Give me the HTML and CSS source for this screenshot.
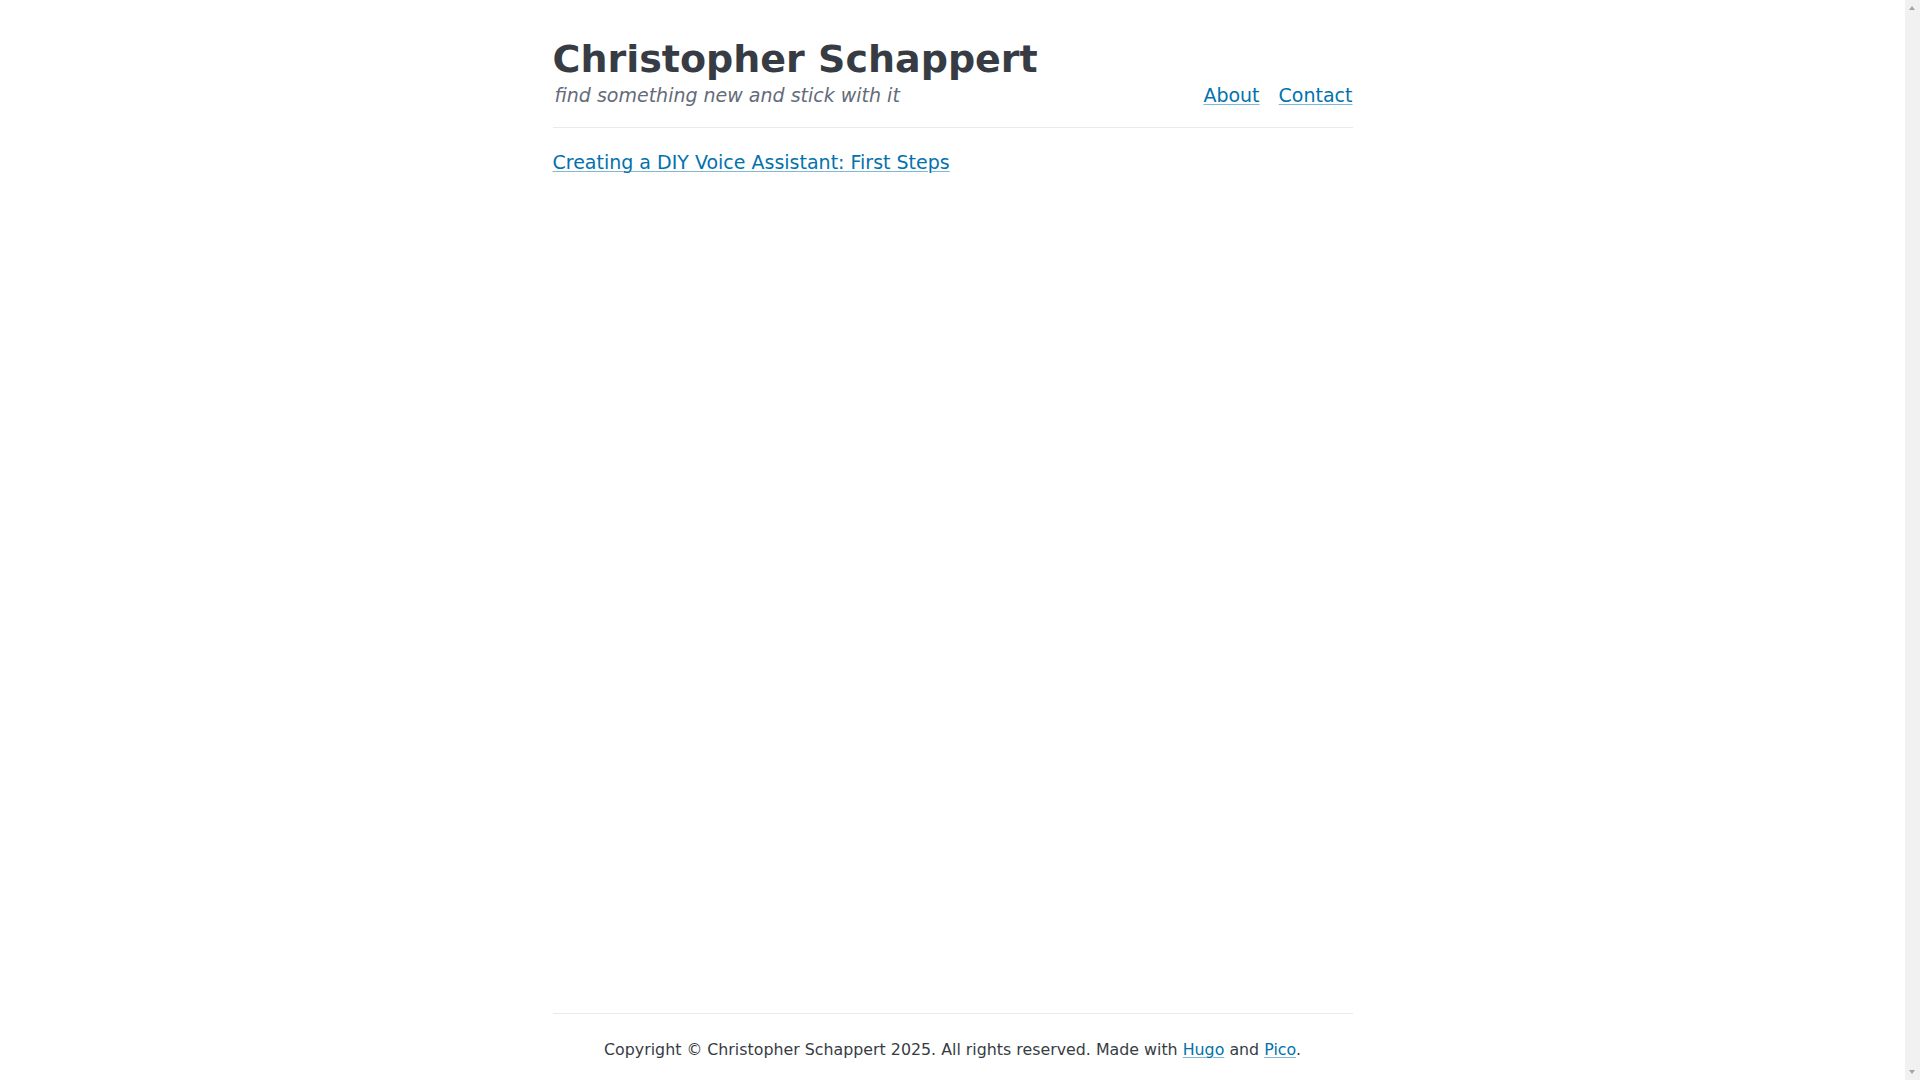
FILE: index.html
```html
<!DOCTYPE html>
<html lang="en">
<head>
<meta charset="utf-8">
<title>Christopher Schappert</title>
<link rel="stylesheet" href="styles.css">
</head>
<body>
<header class="container site-header">
  <nav class="nav">
    <div class="brand">
      <h1 class="title">Christopher Schappert</h1>
      <p class="tagline">find something new and stick with it</p>
    </div>
    <ul class="menu">
      <li><a href="#">About</a></li>
      <li><a href="#">Contact</a></li>
    </ul>
  </nav>
</header>
<main class="container content">
  <ul class="posts">
    <li><a href="#">Creating a DIY Voice Assistant: First Steps</a></li>
  </ul>
</main>
<footer class="container site-footer">
  <small>Copyright © Christopher Schappert 2025. All rights reserved. Made with <a href="#">Hugo</a> and <a href="#">Pico</a>.</small>
</footer>
<div class="scrollbar" aria-hidden="true">
  <span class="arrow arrow-up"></span>
  <span class="arrow arrow-down"></span>
</div>
</body>
</html>
```

FILE: styles.css
```css
html {
  font-size: 19px;
}
body {
  margin: 0;
  padding-right: 15px;
  font-family: "DejaVu Sans", sans-serif;
  color: #373c44;
  background: #fff;
  line-height: 1.5;
  display: flex;
  flex-direction: column;
  min-height: calc(100vh + 9px);
}
a {
  color: #0172ad;
  text-decoration: underline;
  text-decoration-color: rgba(1, 114, 173, 0.5);
  text-underline-offset: 0.125rem;
  text-decoration-thickness: 1px;
}
.container {
  width: 800px;
  margin: 0 auto;
  box-sizing: border-box;
}
.site-header {
  padding-top: 38px;
  border-bottom: 1px solid #e7eaf0;
  padding-bottom: 18px;
}
.nav {
  display: flex;
  justify-content: space-between;
  align-items: flex-end;
}
.title {
  margin: 0;
  font-size: 38px;
  line-height: 1.125;
  font-weight: 700;
  color: #373c44;
}
.tagline {
  margin: 0;
  padding-left: 2px;
  font-style: italic;
  color: #646b79;
  font-size: 19px;
  line-height: 1.5;
}
.menu {
  list-style: none;
  margin: 0;
  padding: 0;
  display: flex;
  gap: 19px;
}
.content {
  flex: 1;
  padding-top: 20px;
}
.posts {
  list-style: none;
  margin: 0;
  padding: 0;
}
.site-footer {
  border-top: 1px solid #e7eaf0;
  padding: 20px 0 27px;
  text-align: center;
}
.site-footer small {
  font-size: 15.83px;
}
.scrollbar {
  position: fixed;
  top: 0;
  right: 0;
  width: 15px;
  height: 100vh;
  background: #f1f1f1;
}
.arrow {
  position: absolute;
  left: 4px;
  width: 0;
  height: 0;
  border-left: 3.5px solid transparent;
  border-right: 3.5px solid transparent;
}
.arrow-up {
  top: 6px;
  border-bottom: 4px solid #a3a3a3;
}
.arrow-down {
  bottom: 6px;
  border-top: 4px solid #a3a3a3;
}
```
